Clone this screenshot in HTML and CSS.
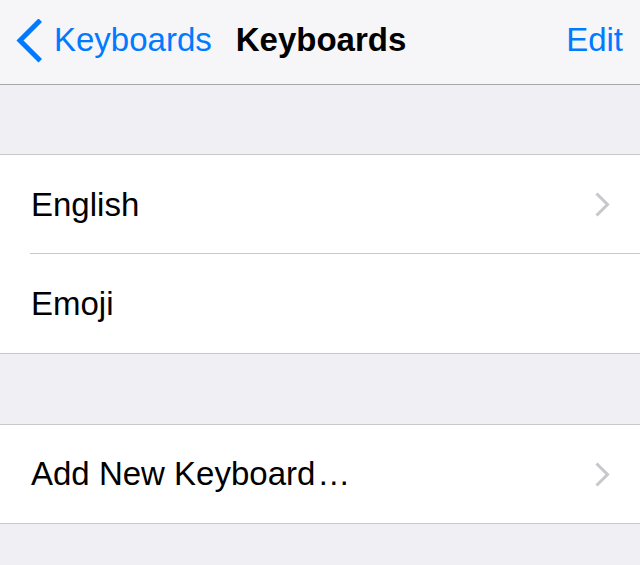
FILE: index.html
```html
<!DOCTYPE html>
<html>
<head>
<meta charset="utf-8">
<link rel="stylesheet" href="styles.css">
</head>
<body>
<header class="nav">
  <a class="back">
    <svg class="back-icon" width="26" height="44" viewBox="0 0 26 44"><path d="M22.5 3 L4 21.5 L22.5 40" fill="none" stroke="#007aff" stroke-width="5" stroke-linecap="square"/></svg>
    <span>Keyboards</span>
  </a>
  <h1 class="title">Keyboards</h1>
  <a class="edit">Edit</a>
</header>
<main>
  <section class="group">
    <div class="row sep"><span class="label">English</span>
      <svg class="chev" width="18" height="28" viewBox="0 0 18 28"><path d="M2.5 2.5 L13.5 13.5 L2.5 24.5" fill="none" stroke="#c7c7cc" stroke-width="3"/></svg>
    </div>
    <div class="row tall"><span class="label">Emoji</span></div>
  </section>
  <section class="group">
    <div class="row"><span class="label">Add New Keyboard<span class="dots">…</span></span>
      <svg class="chev" width="18" height="28" viewBox="0 0 18 28"><path d="M2.5 2.5 L13.5 13.5 L2.5 24.5" fill="none" stroke="#c7c7cc" stroke-width="3"/></svg>
    </div>
  </section>
</main>
</body>
</html>
```
FILE: styles.css
```css
* { box-sizing: border-box; margin: 0; padding: 0; }
html, body { width: 640px; height: 565px; overflow: hidden; }
body {
  background: #efeff4;
  font-family: "Liberation Sans", Arial, sans-serif;
  font-size: 33px;
  color: #000;
}
.nav {
  height: 85px;
  background: #f6f6f8;
  border-bottom: 1px solid #a7a7aa;
  display: flex;
  align-items: center;
  padding: 0 17px 4px 16px;
  position: relative;
}
.back {
  display: flex;
  align-items: center;
  color: #007aff;
  gap: 12px;
}
.back-icon { display: block; margin-top: 1px; }
.title {
  font-size: 33px;
  font-weight: bold;
  margin-left: 24px;
}
.edit {
  color: #007aff;
  margin-left: auto;
}
main {
  padding-top: 69px;
  display: flex;
  flex-direction: column;
  gap: 70px;
}
.group {
  background: #fff;
  border-top: 1px solid #c8c7cc;
  border-bottom: 1px solid #c8c7cc;
}
.row {
  height: 98px;
  display: flex;
  align-items: center;
  padding: 0 28px 0 31px;
  position: relative;
}
.row.tall { height: 99px; }
.row.sep { height: 99px; }
.row.sep::after {
  content: "";
  position: absolute;
  left: 30px;
  right: 0;
  bottom: 0;
  height: 1px;
  background: #c8c7cc;
}
.label { flex: 1; }
.dots { margin-left: 2px; letter-spacing: 0; }
.chev { display: block; margin-top: 1px; }
```
